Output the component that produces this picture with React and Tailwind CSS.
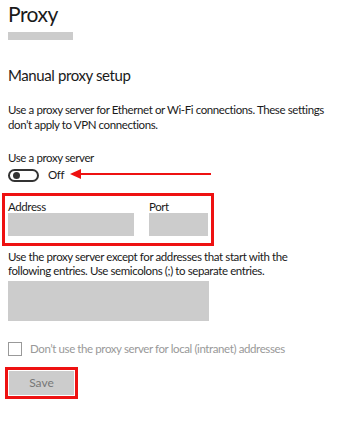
export default function App() {
  return (
    <div
      className="relative w-[340px] h-[431px] bg-white text-[#1a1a1a] overflow-hidden"
      style={{ fontFamily: 'Lato, "Open Sans", sans-serif' }}
    >
      <div className="px-2 pt-[1px]">
        {/* HEADER */}
        <h1 className="text-[21px] leading-[26px] font-normal tracking-[-0.5px]">Proxy</h1>
        <div className="mt-[5px] w-[65px] h-[8px] bg-[#cccccc]" />

        <h2 className="mt-[25px] text-[15px] leading-[20px] tracking-[-0.4px]">Manual proxy setup</h2>

        <p className="mt-[17px] text-[11.5px] leading-[15px] tracking-[-0.4px]">
          Use a proxy server for Ethernet or Wi-Fi connections. These settings
          don’t apply to VPN connections.
        </p>

        <p className="mt-[18px] text-[11.5px] leading-[15px] tracking-[-0.4px]">Use a proxy server</p>

        {/* TOGGLE */}
        <div className="mt-[3px] flex items-center gap-[9px]">
          <div className="w-[31px] h-[13px] rounded-full border-[2px] border-[#333] flex items-center pl-[3px]">
            <div className="w-[7px] h-[7px] rounded-full bg-[#333]" />
          </div>
          <span className="text-[11.5px] leading-[14px] tracking-[-0.4px]">Off</span>
        </div>

        {/* ADDRESS / PORT */}
        <div className="mt-[11px] -ml-[6px] w-[212px] border-[3px] border-[#ee1111] pl-[3px] pt-[4px] pb-[7px] flex gap-[15px]">
          <div className="flex flex-col">
            <span className="text-[11.5px] leading-[13px] tracking-[-0.4px]">Address</span>
            <div className="w-[126px] h-[23px] bg-[#cccccc]" />
          </div>
          <div className="flex flex-col">
            <span className="text-[11.5px] leading-[13px] tracking-[-0.4px]">Port</span>
            <div className="w-[59px] h-[23px] bg-[#cccccc]" />
          </div>
        </div>

        <p className="mt-[4px] text-[11.5px] leading-[14px] tracking-[-0.4px]">
          Use the proxy server except for addresses that start with the
          following entries. Use semicolons (;) to separate entries.
        </p>

        <div className="mt-[3px] w-[201px] h-[40px] bg-[#cccccc]" />

        {/* CHECKBOX */}
        <div className="mt-[21px] flex items-center gap-[8px]">
          <div className="w-[14px] h-[14px] border border-[#999]" />
          <span className="text-[11.5px] leading-[14px] text-[#999] tracking-[-0.4px]">
            Don’t use the proxy server for local (intranet) addresses
          </span>
        </div>

        {/* SAVE */}
        <div className="mt-[11px] -ml-[3px] w-[73px] border-[3px] border-[#ee1111] p-[1px]">
          <div className="h-[24px] bg-[#cccccc] flex items-center justify-center text-[12px] text-[#777]">
            Save
          </div>
        </div>
      </div>

      {/* ARROW */}
      <svg className="absolute left-[70px] top-[168px]" width="142" height="12" viewBox="0 0 142 12">
        <line x1="8" y1="6" x2="141" y2="6" stroke="#ee1111" strokeWidth="2" />
        <polygon points="0,6 11,1 11,11" fill="#ee1111" />
      </svg>
    </div>
  );
}
